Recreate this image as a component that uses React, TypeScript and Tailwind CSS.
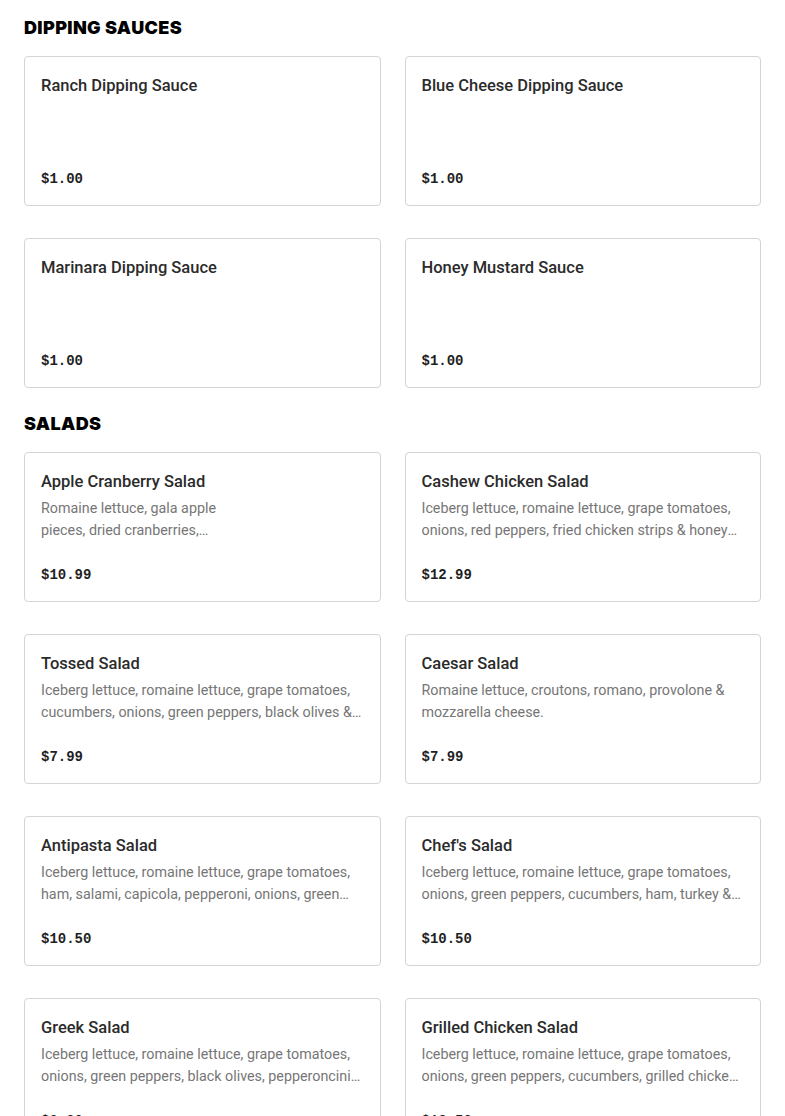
import React from "react";

type Item = { name: string; desc?: string; price: string };

const sauces: Item[] = [
  { name: "Ranch Dipping Sauce", price: "$1.00" },
  { name: "Blue Cheese Dipping Sauce", price: "$1.00" },
  { name: "Marinara Dipping Sauce", price: "$1.00" },
  { name: "Honey Mustard Sauce", price: "$1.00" },
];

const salads: Item[] = [
  {
    name: "Apple Cranberry Salad",
    desc: "Romaine lettuce, gala apple\npieces, dried cranberries,\nwalnuts & feta cheese.",
    price: "$10.99",
  },
  {
    name: "Cashew Chicken Salad",
    desc: "Iceberg lettuce, romaine lettuce, grape tomatoes, onions, red peppers, fried chicken strips & honey roasted cashews.",
    price: "$12.99",
  },
  {
    name: "Tossed Salad",
    desc: "Iceberg lettuce, romaine lettuce, grape tomatoes, cucumbers, onions, green peppers, black olives & croutons.",
    price: "$7.99",
  },
  {
    name: "Caesar Salad",
    desc: "Romaine lettuce, croutons, romano, provolone & mozzarella cheese.",
    price: "$7.99",
  },
  {
    name: "Antipasta Salad",
    desc: "Iceberg lettuce, romaine lettuce, grape tomatoes, ham, salami, capicola, pepperoni, onions, green peppers & provolone.",
    price: "$10.50",
  },
  {
    name: "Chef's Salad",
    desc: "Iceberg lettuce, romaine lettuce, grape tomatoes, onions, green peppers, cucumbers, ham, turkey & provolone.",
    price: "$10.50",
  },
  {
    name: "Greek Salad",
    desc: "Iceberg lettuce, romaine lettuce, grape tomatoes, onions, green peppers, black olives, pepperoncini & feta cheese.",
    price: "$9.99",
  },
  {
    name: "Grilled Chicken Salad",
    desc: "Iceberg lettuce, romaine lettuce, grape tomatoes, onions, green peppers, cucumbers, grilled chicken & provolone.",
    price: "$13.50",
  },
];

function Card({ item }: { item: Item }) {
  return (
    <div className="flex h-[150px] flex-col rounded border border-[#d4d4d4] bg-white px-4 py-4">
      <div className="pt-px text-[16.5px] font-medium leading-6 text-[#2b2b2b]">{item.name}</div>
      {item.desc && (
        <p className="mt-[3px] line-clamp-2 whitespace-pre-line text-[14.3px] leading-[22px] text-[#767676]">
          {item.desc}
        </p>
      )}
      <div className="mt-auto font-['Liberation_Mono',monospace] text-[14px] font-bold leading-5 text-[#1f1f1f]">
        {item.price}
      </div>
    </div>
  );
}

function Section({ title, items }: { title: string; items: Item[] }) {
  return (
    <section>
      <h2 className="mb-4 font-['Inter',sans-serif] text-[18px] font-black uppercase leading-6 tracking-[0.02em] text-black">
        {title}
      </h2>
      <div className="grid grid-cols-2 gap-x-6 gap-y-8">
        {items.map((it) => (
          <Card key={it.name} item={it} />
        ))}
      </div>
    </section>
  );
}

export default function App() {
  return (
    <div className="min-h-screen bg-white px-6 pt-4 pb-10 font-['Roboto',sans-serif]">
      <div className="flex flex-col gap-6">
        <Section title="Dipping Sauces" items={sauces} />
        <Section title="Salads" items={salads} />
      </div>
    </div>
  );
}
